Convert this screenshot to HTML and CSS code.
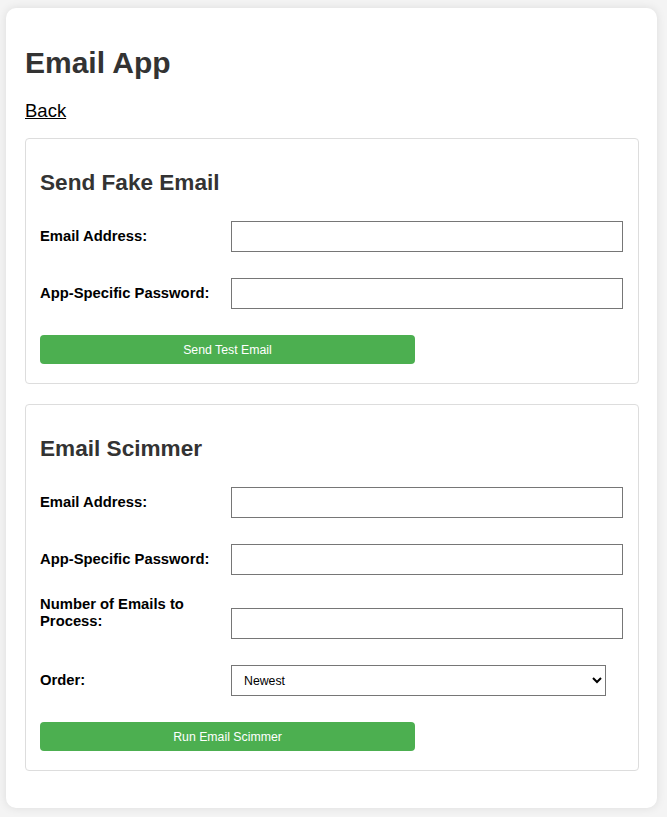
FILE: index.html
```html
<!DOCTYPE html>
<html lang="en">
<head>
<meta charset="utf-8">
<title>Email App</title>
<link rel="stylesheet" href="styles.css">
</head>
<body>
<div class="container">
  <h1 class="title">Email App</h1>
  <a class="back" href="#">Back</a>

  <section class="card">
    <h2 class="card-title">Send Fake Email</h2>
    <div class="form-row">
      <label class="form-label" for="e1">Email Address:</label>
      <input class="form-input" id="e1" type="email">
    </div>
    <div class="form-row">
      <label class="form-label" for="p1">App-Specific Password:</label>
      <input class="form-input" id="p1" type="password">
    </div>
    <button class="btn" type="button">Send Test Email</button>
  </section>

  <section class="card">
    <h2 class="card-title">Email Scimmer</h2>
    <div class="form-row">
      <label class="form-label" for="e2">Email Address:</label>
      <input class="form-input" id="e2" type="email">
    </div>
    <div class="form-row">
      <label class="form-label" for="p2">App-Specific Password:</label>
      <input class="form-input" id="p2" type="password">
    </div>
    <div class="form-row form-row--tall">
      <label class="form-label" for="n2">Number of Emails to Process:</label>
      <input class="form-input" id="n2" type="number">
    </div>
    <div class="form-row">
      <label class="form-label" for="o2">Order:</label>
      <select class="form-select" id="o2">
        <option>Newest</option>
        <option>Oldest</option>
      </select>
    </div>
    <button class="btn" type="button">Run Email Scimmer</button>
  </section>
</div>
</body>
</html>
```

FILE: styles.css
```css
* { box-sizing: border-box; }

html, body {
  margin: 0;
  padding: 0;
}

body {
  background: #f4f4f4;
  font-family: "Liberation Sans", Arial, sans-serif;
  color: #333;
}

.container {
  margin: 8px 10px 9px 6px;
  padding: 19px 18px 19px 19px;
  background: #fff;
  border-radius: 10px;
  box-shadow: 0 0 10px rgba(0, 0, 0, 0.1);
}

.title {
  margin: 19px 0 20px;
  font-size: 30px;
  line-height: 34px;
  font-weight: bold;
  color: #333;
}

.back {
  display: block;
  width: max-content;
  font-size: 18.5px;
  line-height: 21px;
  color: #000;
  text-decoration: underline;
  margin-bottom: 17px;
}

.card {
  border: 1px solid #ddd;
  border-radius: 4px;
  padding: 0 14px 19px;
  margin-bottom: 20px;
}

.card:last-child { margin-bottom: 18px; }

.card-title {
  margin: 31px 0 25px;
  font-size: 22.6px;
  line-height: 26px;
  font-weight: bold;
  color: #333;
}

.form-row {
  display: flex;
  align-items: center;
  margin-bottom: 26px;
}

.form-row--tall {
  align-items: flex-start;
  margin-top: -5px;
}

.form-row--tall .form-input { margin-top: 12px; }

.form-label {
  flex: 0 0 191px;
  padding-right: 8px;
  font-size: 14.8px;
  line-height: 17px;
  font-weight: bold;
  color: #000;
}

.form-input {
  width: 392px;
  height: 31px;
  border: 1px solid #767676;
  border-radius: 0;
  padding: 4px 8px;
  font-family: "Liberation Sans", Arial, sans-serif;
  font-size: 12.3px;
  background: #fff;
}

.form-select {
  width: 375px;
  height: 31px;
  border: 1px solid #767676;
  border-radius: 0;
  padding: 0 6px 0 8px;
  font-family: "Liberation Sans", Arial, sans-serif;
  font-size: 12.3px;
  color: #000;
  background: #fff;
}

.btn {
  display: block;
  width: 375px;
  height: 29px;
  margin-top: 1px;
  border: none;
  border-radius: 4px;
  background: #4caf50;
  color: #fff;
  font-family: "Liberation Sans", Arial, sans-serif;
  font-size: 12.3px;
  padding: 0;
}
```
